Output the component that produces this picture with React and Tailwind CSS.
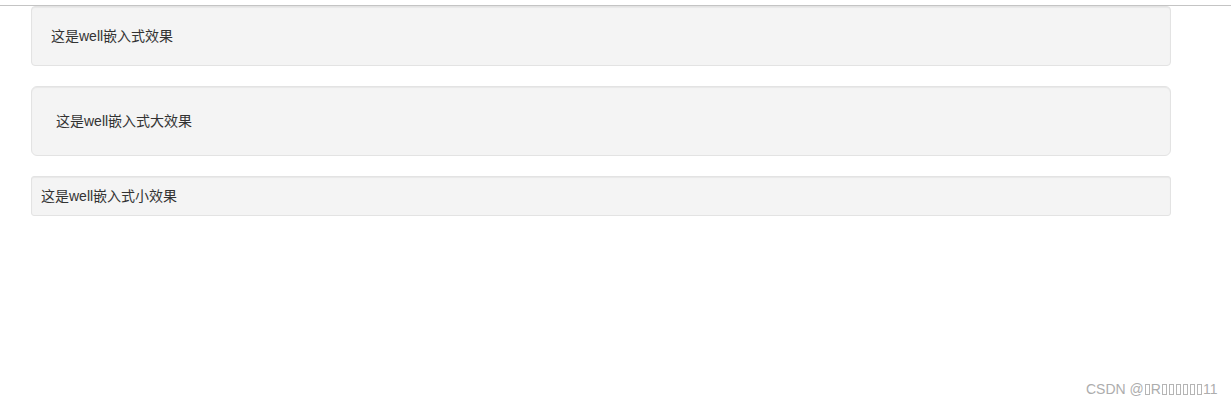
const WELLS = [
  { text: '这是well嵌入式效果', cls: 'p-[19px] rounded-[4px] mb-5' },
  { text: '这是well嵌入式大效果', cls: 'p-6 rounded-[6px] mb-5' },
  { text: '这是well嵌入式小效果', cls: 'p-[9px] rounded-[3px] mb-5' },
];

function Tofu() {
  return <span className="inline-block w-[5px] h-[11px] border border-[#b5b5b5] mx-[1px] align-[-1px]" />;
}

export default function App() {
  return (
    <div
      className="relative w-[1231px] h-[405px] bg-white text-[#333] text-sm leading-5 overflow-hidden"
      style={{ fontFamily: '"Liberation Sans", "Noto Sans CJK SC", sans-serif' }}
    >
      <div className="h-[5px]" />
      <div className="h-px bg-[#c4c4c4]" />
      <div className="w-[1140px] ml-[31px]">
        {WELLS.map(({ text, cls }) => (
          <div
            key={text}
            className={`bg-[#f4f4f4] border border-[#e3e3e3] shadow-[inset_0_1px_1px_rgba(0,0,0,0.05)] ${cls}`}
          >
            {text}
          </div>
        ))}
      </div>

      {/* watermark */}
      <div className="absolute left-[1086px] top-[380px] text-[14px] leading-[18px] text-[#adadad] flex items-center">
        <span>CSDN @</span>
        <Tofu />
        <span>R</span>
        <Tofu />
        <Tofu />
        <Tofu />
        <Tofu />
        <Tofu />
        <Tofu />
        <span>11</span>
      </div>
    </div>
  );
}
